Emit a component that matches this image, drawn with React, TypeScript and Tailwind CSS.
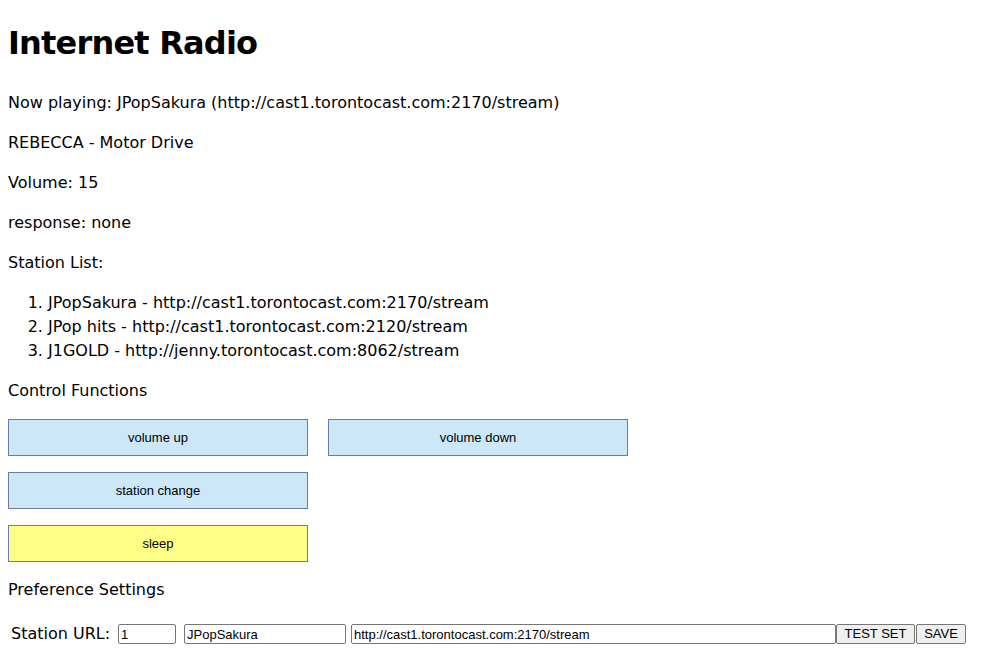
import React from 'react';

const stations = [
    { name: 'JPopSakura', url: 'http://cast1.torontocast.com:2170/stream' },
    { name: 'JPop hits', url: 'http://cast1.torontocast.com:2120/stream' },
    { name: 'J1GOLD', url: 'http://jenny.torontocast.com:8062/stream' },
];

const ControlButton: React.FC<{ label: string; yellow?: boolean }> = ({ label, yellow }) => (
    <button
        className={`w-[300px] h-[37px] border border-[#6b7aa8] text-[13px] text-black font-['Liberation_Sans',Arial,sans-serif] ${
            yellow ? 'bg-[#ffff88]' : 'bg-[#cce7f8]'
        }`}
    >
        {label}
    </button>
);

const App: React.FC = () => {
    return (
        <div className="min-h-screen bg-white p-2 text-[16px] leading-6 text-black font-['DejaVu_Sans','Noto_Sans_CJK_JP',sans-serif]">
            <h1 className="text-[32px] font-bold leading-[48px] tracking-[-0.8px] mt-[11px] mb-[24px]">Internet Radio</h1>

            <p className="mb-4">Now playing: JPopSakura (http://cast1.torontocast.com:2170/stream)</p>
            <p className="mb-4">REBECCA - Motor Drive</p>
            <p className="mb-4">Volume: 15</p>
            <p className="mb-4">response: none</p>
            <p className="mb-4">Station List:</p>

            <ol className="list-decimal pl-10 mb-4">
                {stations.map((s) => (
                    <li key={s.name}>
                        {s.name} - {s.url}
                    </li>
                ))}
            </ol>

            <p className="mb-4">Control Functions</p>

            {/* control buttons */}
            <div className="flex flex-col gap-4">
                <div className="flex gap-5">
                    <ControlButton label="volume up" />
                    <ControlButton label="volume down" />
                </div>
                <div className="flex">
                    <ControlButton label="station change" />
                </div>
                <div className="flex">
                    <ControlButton label="sleep" yellow />
                </div>
            </div>

            <p className="mt-4 mb-4">Preference Settings</p>

            <div className="flex items-center h-[22px] mt-[21px] font-['Liberation_Sans',Arial,sans-serif] text-[13px] leading-4">
                <span className="ml-[3px] w-[107px] text-[16px] font-['DejaVu_Sans','Noto_Sans_CJK_JP',sans-serif]">Station URL:</span>
                <input
                    defaultValue="1"
                    className="w-[58px] h-[20px] px-[2px] border border-[#767676] rounded-[2px] bg-white outline-none"
                />
                <input
                    defaultValue="JPopSakura"
                    className="ml-2 w-[162px] h-[20px] px-[2px] border border-[#767676] rounded-[2px] bg-white outline-none"
                />
                <input
                    defaultValue="http://cast1.torontocast.com:2170/stream"
                    className="ml-[5px] w-[485px] h-[20px] px-[2px] border border-[#767676] rounded-[2px] bg-white outline-none"
                />
                <button className="w-[79px] h-[20px] border border-[#767676] rounded-[2px] bg-[#efefef] px-1.5">TEST SET</button>
                <button className="ml-px w-[50px] h-[20px] border border-[#767676] rounded-[2px] bg-[#efefef] px-1.5">SAVE</button>
            </div>
        </div>
    );
};

export default App;
